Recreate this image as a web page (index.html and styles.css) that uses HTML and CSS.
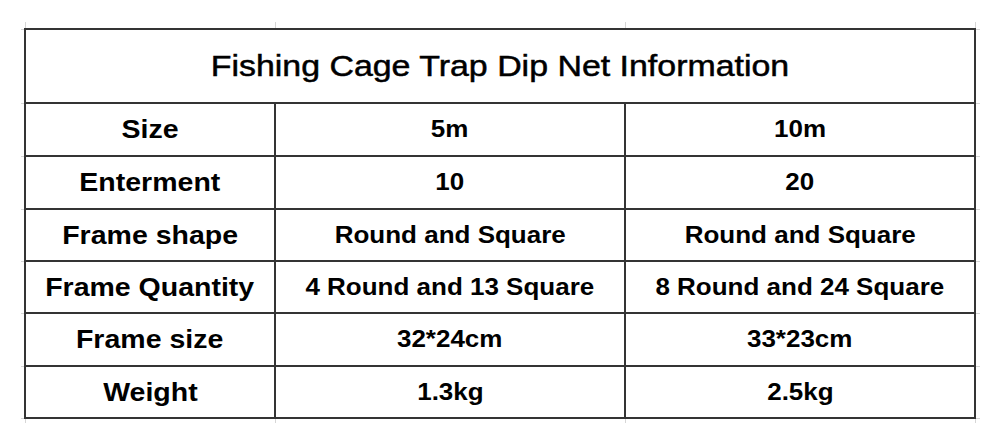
FILE: index.html
```html
<!DOCTYPE html>
<html lang="en">
<head>
<meta charset="utf-8">
<title>Fishing Cage Trap Dip Net Information</title>
<link rel="stylesheet" href="styles.css">
</head>
<body>
<div class="sheet">
  <table class="info">
    <colgroup>
      <col class="c1">
      <col class="c2">
      <col class="c3">
    </colgroup>
    <tr class="r-title">
      <td colspan="3"><span class="t">Fishing Cage Trap Dip Net Information</span></td>
    </tr>
    <tr class="r1">
      <td><span class="k">Size</span></td>
      <td><span class="v">5m</span></td>
      <td><span class="v">10m</span></td>
    </tr>
    <tr class="r1">
      <td><span class="k">Enterment</span></td>
      <td><span class="v">10</span></td>
      <td><span class="v">20</span></td>
    </tr>
    <tr class="r2">
      <td><span class="k">Frame shape</span></td>
      <td><span class="v">Round and Square</span></td>
      <td><span class="v">Round and Square</span></td>
    </tr>
    <tr class="r2">
      <td><span class="k">Frame Quantity</span></td>
      <td><span class="v">4 Round and 13 Square</span></td>
      <td><span class="v">8 Round and 24 Square</span></td>
    </tr>
    <tr class="r1">
      <td><span class="k">Frame size</span></td>
      <td><span class="v">32*24cm</span></td>
      <td><span class="v">33*23cm</span></td>
    </tr>
    <tr class="r2">
      <td><span class="k">Weight</span></td>
      <td><span class="v">1.3kg</span></td>
      <td><span class="v">2.5kg</span></td>
    </tr>
  </table>
</div>
</body>
</html>
```
FILE: styles.css
```css
html, body {
  margin: 0;
  padding: 0;
  background: #ffffff;
}

body {
  font-family: "Liberation Sans", Arial, sans-serif;
  color: #000000;
}

.sheet {
  width: 952px;
  margin: 22px 0 0 21px;
  padding: 6px 4px 4px 3px;
  --g: #d6d6d6;
  background:
    linear-gradient(var(--g), var(--g)) 4px 0 / 1px 100% no-repeat,
    linear-gradient(var(--g), var(--g)) 254px 0 / 1px 100% no-repeat,
    linear-gradient(var(--g), var(--g)) 604px 0 / 1px 100% no-repeat,
    linear-gradient(var(--g), var(--g)) 954px 0 / 1px 100% no-repeat,
    linear-gradient(var(--g), var(--g)) 0 7px / 100% 1px no-repeat,
    linear-gradient(var(--g), var(--g)) 0 81px / 100% 1px no-repeat,
    linear-gradient(var(--g), var(--g)) 0 134px / 100% 1px no-repeat,
    linear-gradient(var(--g), var(--g)) 0 187px / 100% 1px no-repeat,
    linear-gradient(var(--g), var(--g)) 0 239px / 100% 1px no-repeat,
    linear-gradient(var(--g), var(--g)) 0 291px / 100% 1px no-repeat,
    linear-gradient(var(--g), var(--g)) 0 344px / 100% 1px no-repeat,
    linear-gradient(var(--g), var(--g)) 0 396px / 100% 1px no-repeat,
    #ffffff;
}

.info {
  border-collapse: separate;
  border-spacing: 2px;
  background: #343434;
  table-layout: fixed;
  width: 952px;
}

.c1 { width: 248px; }
.c2 { width: 348px; }
.c3 { width: 348px; }

.info td {
  background: #ffffff;
  padding: 0;
  text-align: center;
  vertical-align: middle;
  white-space: nowrap;
  overflow: hidden;
}

.r-title td { height: 72px; }
.r1 td { height: 51px; }
.r2 td { height: 50px; }

.t, .k, .v {
  display: inline-block;
  line-height: 1;
}

.t {
  font-size: 30px;
  font-weight: normal;
  -webkit-text-stroke: 0.5px #000;
  transform: scaleX(1.13);
}

.k {
  font-size: 25px;
  font-weight: bold;
  transform: scaleX(1.14);
}

.v {
  font-size: 23px;
  font-weight: bold;
  transform: scaleX(1.13);
}
```
